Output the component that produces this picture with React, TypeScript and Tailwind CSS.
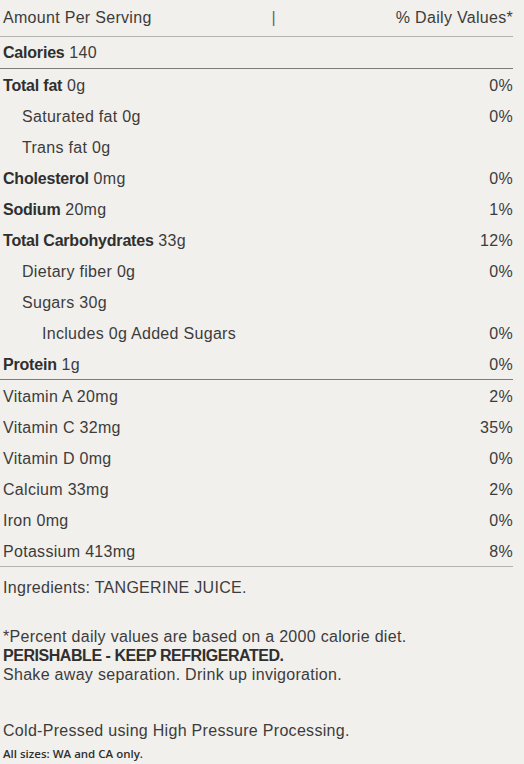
import React from "react";

type Row = { label: React.ReactNode; pct?: string; indent?: 0 | 1 | 2 };

const B = ({ children }: { children: React.ReactNode }) => (
  <span className="font-bold tracking-[-0.2px] text-[#2f2f2f]">{children}</span>
);

const macro: Row[] = [
  { label: <><B>Total fat</B> 0g</>, pct: "0%" },
  { label: "Saturated fat 0g", pct: "0%", indent: 1 },
  { label: "Trans fat 0g", indent: 1 },
  { label: <><B>Cholesterol</B> 0mg</>, pct: "0%" },
  { label: <><B>Sodium</B> 20mg</>, pct: "1%" },
  { label: <><B>Total Carbohydrates</B> 33g</>, pct: "12%" },
  { label: "Dietary fiber 0g", pct: "0%", indent: 1 },
  { label: "Sugars 30g", indent: 1 },
  { label: "Includes 0g Added Sugars", pct: "0%", indent: 2 },
  { label: <><B>Protein</B> 1g</>, pct: "0%" },
];

const vits: Row[] = [
  { label: "Vitamin A 20mg", pct: "2%" },
  { label: "Vitamin C 32mg", pct: "35%" },
  { label: "Vitamin D 0mg", pct: "0%" },
  { label: "Calcium 33mg", pct: "2%" },
  { label: "Iron 0mg", pct: "0%" },
  { label: "Potassium 413mg", pct: "8%" },
];

function RowView({ r }: { r: Row }) {
  const pad = r.indent === 2 ? "pl-[42px]" : r.indent === 1 ? "pl-[22px]" : "pl-[3px]";
  return (
    <div className={`flex h-[31px] items-center justify-between pt-[2px] ${pad}`}>
      <span>{r.label}</span>
      <span>{r.pct ?? ""}</span>
    </div>
  );
}

export default function App() {
  return (
    <div
      className="min-h-[764px] w-[524px] bg-[#f2f0ec] text-[16px] tracking-[0.3px] text-[#3c3c3c]"
      style={{ fontFamily: '"Liberation Sans", Arial, sans-serif' }}
    >
      <div className="w-[513px]">
        <div className="flex h-[37px] items-center justify-between border-b border-[#b5b3af] pl-[3px]">
          <span>Amount Per Serving</span>
          <span className="text-[#666]">|</span>
          <span>% Daily Values*</span>
        </div>
        <div className="flex h-[32px] items-center border-b border-[#7d7b78] pl-[3px] pt-[1px]">
          <span><B>Calories</B> 140</span>
        </div>
        <div className="border-b border-[#7d7b78]">
          {macro.map((r, i) => (
            <RowView key={i} r={r} />
          ))}
        </div>
        <div className="border-b border-[#b5b3af]">
          {vits.map((r, i) => (
            <RowView key={i} r={r} />
          ))}
        </div>
        <div className="pl-[3px]">
          <div className="mt-[11px] leading-[19px]">Ingredients: TANGERINE JUICE.</div>
          <div className="mt-[30px] leading-[19px]">
            *Percent daily values are based on a 2000 calorie diet.
          </div>
          <div className="font-bold leading-[19px] tracking-[-0.45px] text-[#2f2f2f]">PERISHABLE - KEEP REFRIGERATED.</div>
          <div className="leading-[19px]">Shake away separation. Drink up invigoration.</div>
          <div className="mt-[37px] leading-[19px]">Cold-Pressed using High Pressure Processing.</div>
          <div
            className="mt-[5px] text-[11.5px] font-semibold tracking-normal text-[#2f2f2f]"
            style={{ fontFamily: '"Open Sans", sans-serif' }}
          >
            All sizes: WA and CA only.
          </div>
        </div>
      </div>
    </div>
  );
}
